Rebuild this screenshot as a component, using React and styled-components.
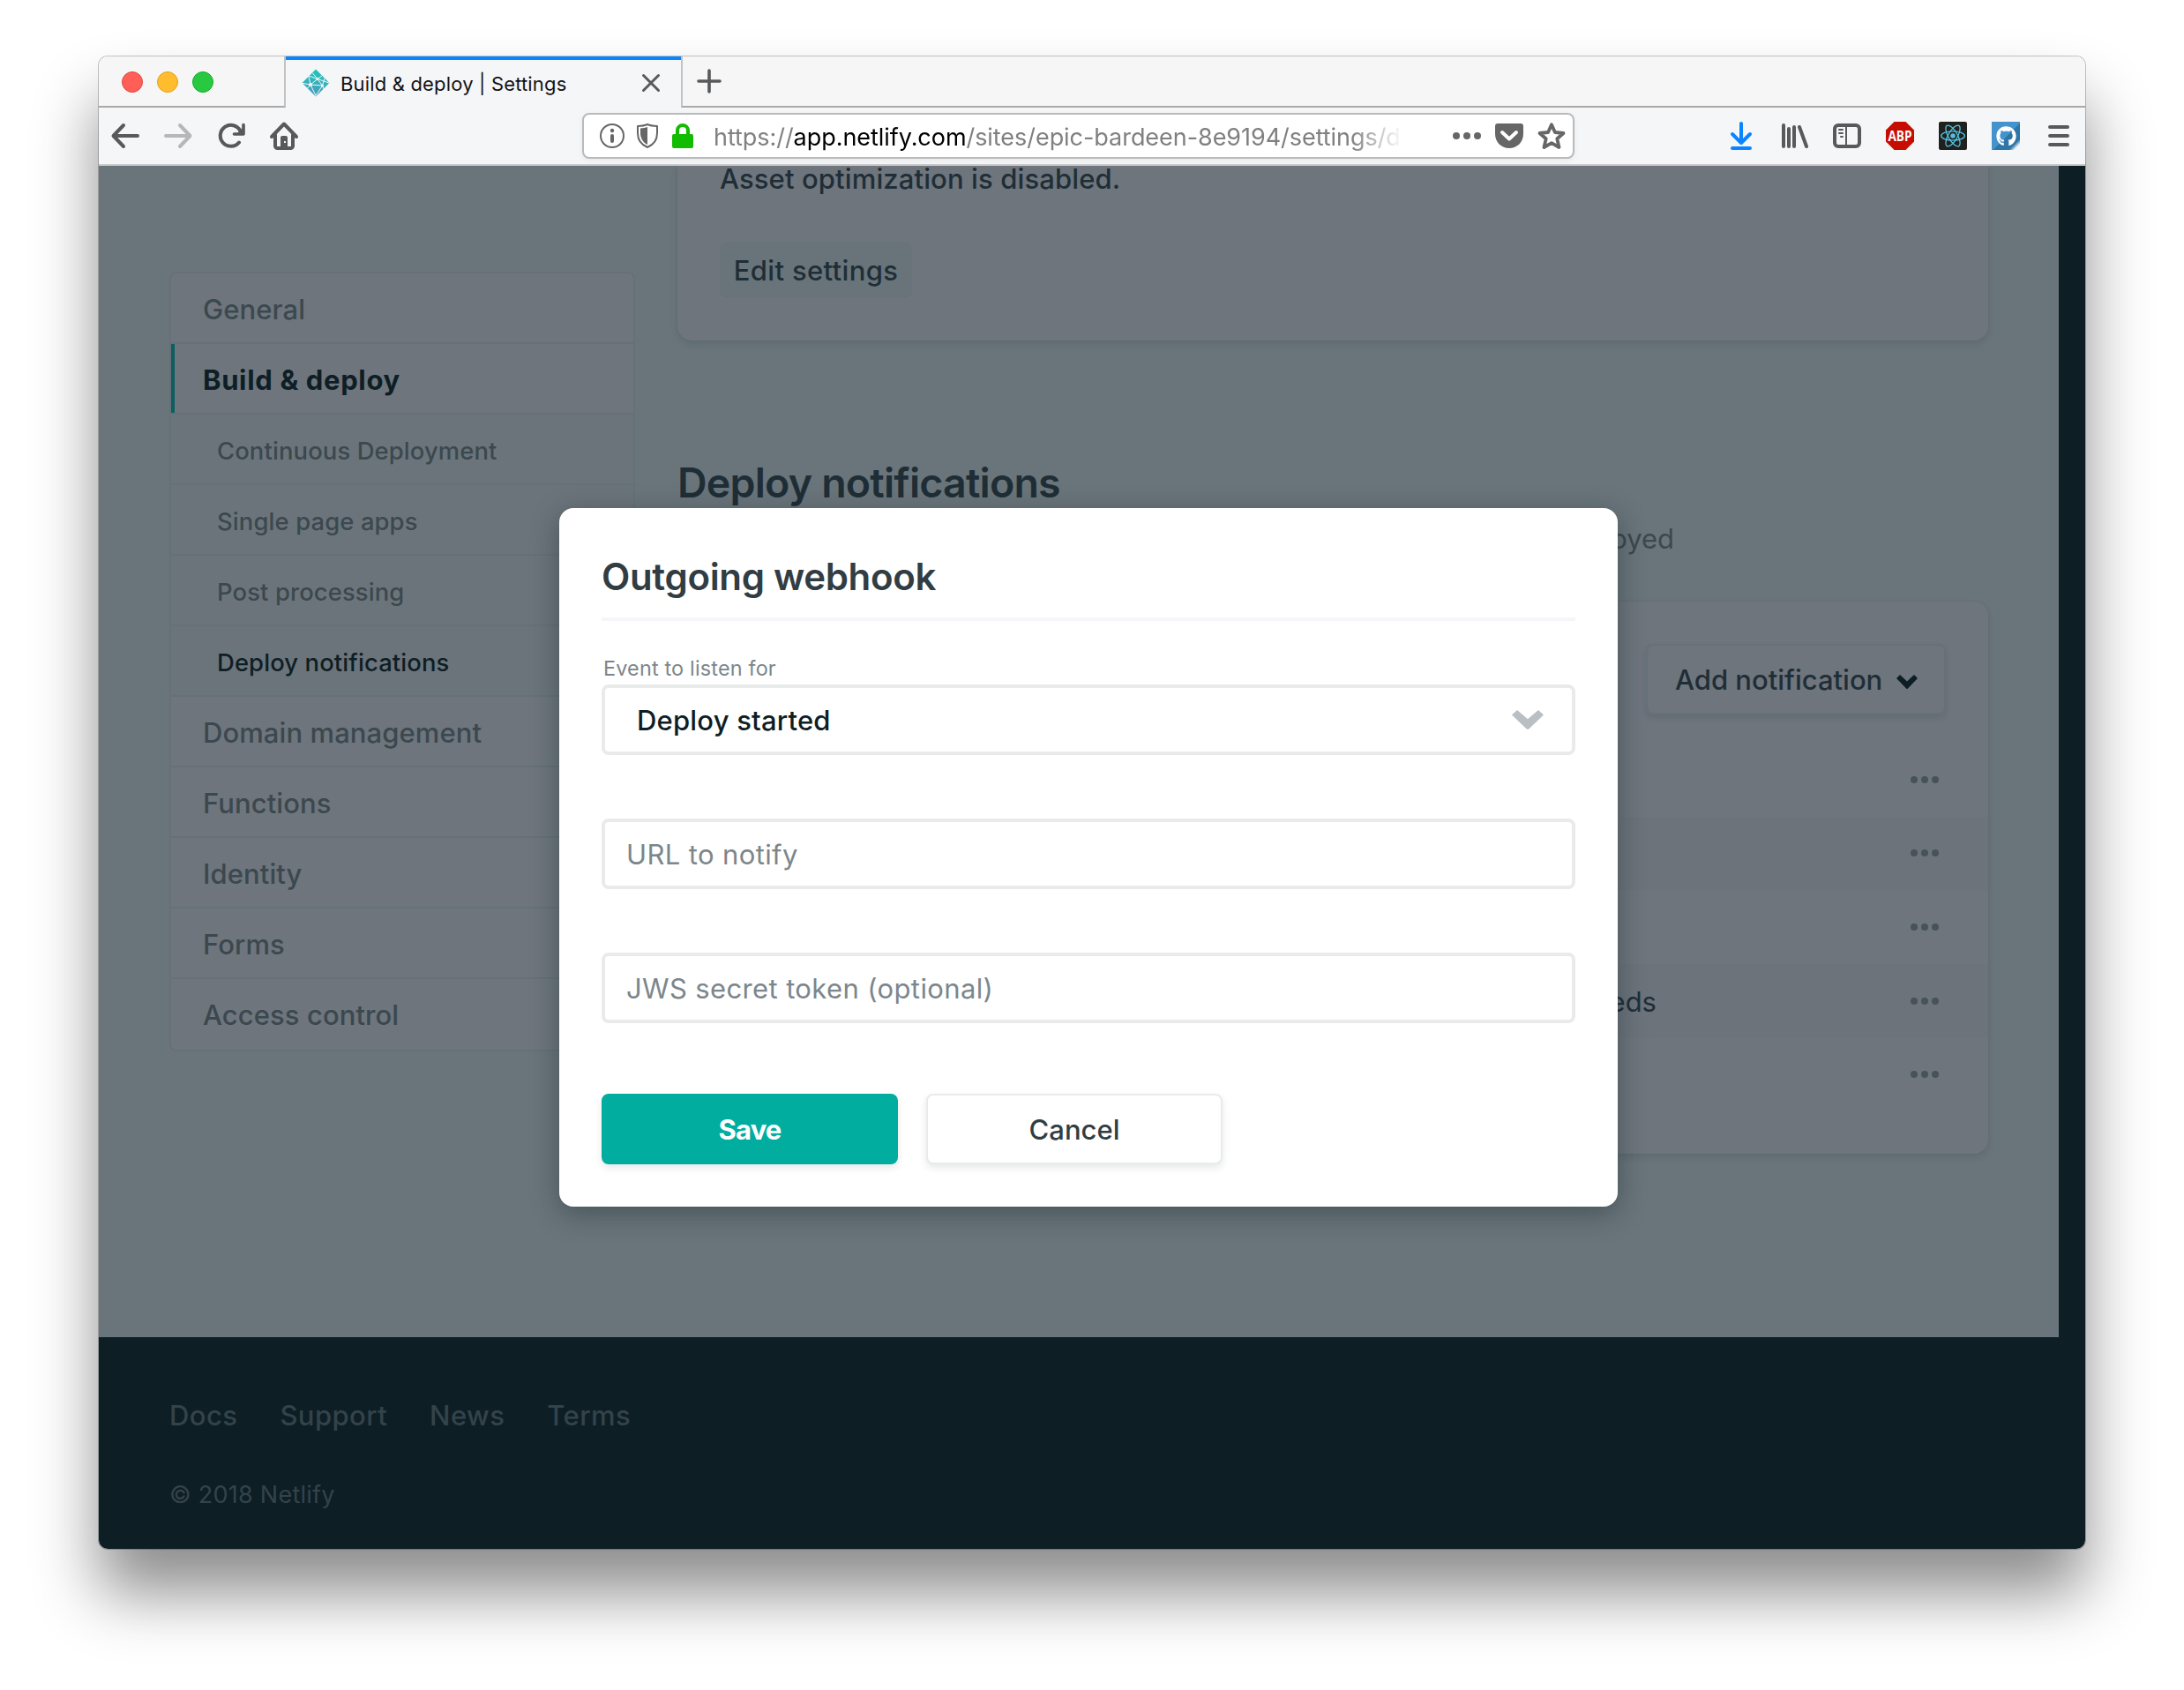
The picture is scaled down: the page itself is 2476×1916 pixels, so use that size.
import React from 'react';
import styled, { createGlobalStyle, css } from 'styled-components';
import { FaGithub } from 'react-icons/fa';

const GlobalStyle = createGlobalStyle`
  *, *::before, *::after { box-sizing: border-box; }
  body {
    margin: 0;
    background: #fff;
    font-family: Inter, 'Liberation Sans', sans-serif;
    font-size: 31px;
    font-weight: 500;
    color: #1f2e36;
  }
  button, input { font: inherit; letter-spacing: inherit; margin: 0; }
`;

const Desktop = styled.main`
  width: 2476px;
  height: 1916px;
  padding: 64px 112px 160px;
  overflow: hidden;
`;

const Window = styled.div`
  height: 1692px;
  border-radius: 10px;
  box-shadow: 0 0 0 1px rgba(0, 0, 0, 0.22), 0 50px 72px rgba(0, 0, 0, 0.45);
`;

const WindowClip = styled.div`
  height: 100%;
  display: flex;
  flex-direction: column;
  border-radius: 10px;
  overflow: hidden;
`;

const TabStrip = styled.div`
  display: flex;
  height: 58px;
  flex: none;
  background: #f6f6f6;
`;

const TrafficLights = styled.div`
  display: flex;
  gap: 16px;
  width: 212px;
  padding: 17px 0 0 26px;
  border-right: 2px solid #c2c3c4;
  border-bottom: 2px solid #a9a9a9;
`;

const Light = styled.span`
  width: 24px;
  height: 24px;
  border-radius: 50%;
  background: ${(p) => p.$fill};
  border: 1px solid ${(p) => p.$edge};
`;

const Tab = styled.div`
  display: flex;
  align-items: center;
  width: 448px;
  padding: 0 24px 2px 18px;
  background: #f5f6f8;
  border-top: 4px solid #0a84ff;
`;

const TabTitle = styled.span`
  flex: 1;
  margin-left: 12px;
  padding-top: 1px;
  font-size: 22px;
  font-weight: 400;
  letter-spacing: 0.17px;
  color: #141416;
  white-space: nowrap;
`;

const TabRest = styled.div`
  flex: 1;
  padding: 14px 0 0 16px;
  border-left: 2px solid #c2c3c4;
  border-bottom: 2px solid #a9a9a9;
`;

const Toolbar = styled.div`
  display: flex;
  align-items: center;
  justify-content: space-between;
  height: 66px;
  flex: none;
  padding: 0 18px 0 14px;
  background: #f5f6f8;
  border-bottom: 2px solid #cbcbcb;
`;

const NavButtons = styled.div`
  display: flex;
  align-items: center;
  gap: 28px;
  width: 534px;
`;

const UrlBar = styled.div`
  display: flex;
  align-items: center;
  width: 1125px;
  height: 52px;
  padding: 0 8px 0 18px;
  gap: 14px;
  background: #fff;
  border: 2px solid #b9babc;
  border-radius: 8px;
  box-shadow: 0 2px 6px rgba(0, 0, 0, 0.06);
`;

const UrlText = styled.div`
  flex: 1;
  min-width: 0;
  margin-left: 9px;
  margin-right: 42px;
  padding-top: 3px;
  overflow: hidden;
  white-space: nowrap;
  font-size: 27px;
  font-weight: 400;
  line-height: 40px;
  letter-spacing: -0.05px;
  color: #808080;
  mask-image: linear-gradient(to right, #000 calc(100% - 60px), transparent);
  b { font-weight: 400; color: #000; }
`;

const UrlActions = styled.div`
  display: flex;
  align-items: center;
  gap: 16px;
`;

const Extensions = styled.div`
  display: flex;
  align-items: center;
  gap: 28px;
  margin-left: auto;
`;

const Icon = styled.svg`
  display: block;
  flex: none;
  width: ${(p) => p.$w || 32}px;
  height: ${(p) => p.$h || p.$w || 32}px;
  margin-left: ${(p) => p.$ml || 0}px;
  margin-top: ${(p) => p.$mt || 0}px;
  overflow: visible;
`;

const OctoTile = styled.span`
  display: grid;
  place-items: center;
  width: 32px;
  height: 32px;
  color: #fff;
  font-size: 23px;
  background: linear-gradient(135deg, #4493cc 0 52%, #2e76a8 52% 80%, #f5f6f8 90%);
`;

const Viewport = styled.div`
  position: relative;
  flex: 1;
  min-height: 0;
  background: #0e1e25;
`;

const Page = styled.div`
  width: 2222px;
  height: 1328px;
  padding: 0 80px;
  display: grid;
  grid-template-columns: 528px 1486px;
  column-gap: 48px;
  align-items: start;
  background: #69757a;
  overflow: hidden;
`;

const SideMenu = styled.nav`
  margin-top: 120px;
  border: 2px solid #657177;
  border-radius: 8px;
  overflow: hidden;
  background: #6e757d;
`;

const MenuItem = styled.a`
  display: block;
  height: 80px;
  line-height: 80px;
  padding: 1px 0 0 36px;
  border-bottom: 2px solid #657177;
  font-weight: 500;
  letter-spacing: 0.08px;
  color: #3b484e;
  white-space: nowrap;
  &:last-child { border-bottom: 0; }

  ${(p) => p.$sub && css`
    padding-left: 52px;
    font-size: 27.4px;
    letter-spacing: 0.12px;
    background: #6c747b;
  `}
  ${(p) => p.$active && css`
    color: #0e1e25;
  `}
  ${(p) => p.$active && !p.$sub && css`
    box-shadow: inset 4px 0 0 #0b5f60;
    font-weight: 700;
    letter-spacing: 0.65px;
  `}
`;

const Column = styled.div`
  display: flex;
  flex-direction: column;
  width: 1486px;
`;

const Card = styled.section`
  background: #6e757d;
  box-shadow: 0 4px 8px rgba(14, 30, 37, 0.1), 0 0 3px rgba(14, 30, 37, 0.06);
  border-radius: 16px;
`;

const AssetCard = styled(Card)`
  height: 198px;
  padding: 0 48px;
  border-radius: 0 0 16px 16px;
`;

const AssetText = styled.p`
  margin: 0;
  height: 86px;
  line-height: 30px;
  letter-spacing: 0.12px;
`;

const EditButton = styled.button`
  display: block;
  width: 218px;
  height: 64px;
  padding: 0;
  border: 0;
  border-radius: 8px;
  background: #68747a;
  color: inherit;
  letter-spacing: 0.35px;
`;

const SectionTitle = styled.h2`
  margin: 131px 0 6px;
  height: 60px;
  line-height: 60px;
  font-size: 46.5px;
  font-weight: 600;
  letter-spacing: -0.8px;
`;

const SectionLead = styled.p`
  display: flex;
  justify-content: flex-end;
  width: 1130px;
  height: 99px;
  margin: 0;
  padding-top: 8px;
  line-height: 40px;
  font-weight: 400;
  color: #3b484e;
  white-space: nowrap;
`;

const NotifyCard = styled(Card)`
  height: 626px;
  padding: 48px 0 0;
`;

const AddButton = styled.button`
  display: flex;
  align-items: center;
  justify-content: space-between;
  width: 340px;
  height: 80px;
  margin: 0 48px 32px auto;
  padding: 0 30px 0 31px;
  background: #6e757d;
  border: 2px solid #667278;
  border-radius: 8px;
  box-shadow: 0 4px 6px rgba(14, 30, 37, 0.1);
  color: inherit;
`;

const NotifyRow = styled.div`
  display: flex;
  align-items: center;
  justify-content: space-between;
  height: 83.6px;
  padding: 0 56px 0 48px;
  font-weight: 400;
  background: ${(p) => (p.$alt ? '#6c737b' : 'transparent')};
`;

const RowText = styled.span`
  width: 1062px;
  padding-top: 2px;
  text-align: right;
  white-space: nowrap;
`;

const Dots = styled.span`
  display: flex;
  gap: 4px;
  &::before, &::after, i {
    content: '';
    width: 8px;
    height: 8px;
    border-radius: 50%;
    background: ${(p) => p.$color || '#46535a'};
  }
`;

const Footer = styled.footer`
  padding: 64px 80px 0;
  color: #34434a;
`;

const FooterLinks = styled.div`
  display: flex;
  gap: 48px;
  line-height: 50px;
  letter-spacing: 0.42px;
`;

const Copyright = styled.div`
  margin-top: 41px;
  line-height: 48px;
  font-size: 27px;
  font-weight: 400;
  letter-spacing: 0.25px;
`;

const Overlay = styled.div`
  position: absolute;
  inset: 0;
  padding-right: 8px;
  display: grid;
  place-items: center;
`;

const Dialog = styled.form`
  width: 1200px;
  height: 792px;
  padding: 48px;
  background: #fff;
  border-radius: 16px;
  box-shadow: 0 8px 32px rgba(14, 30, 37, 0.38);
`;

const DialogTitle = styled.h1`
  margin: 0 0 36px;
  height: 80px;
  line-height: 59px;
  font-size: 42px;
  font-weight: 600;
  letter-spacing: -0.32px;
  color: #313d43;
  border-bottom: 4px solid #f5f6f9;
`;

const FieldLabel = styled.label`
  display: block;
  height: 36px;
  padding-left: 2px;
  line-height: 35px;
  font-size: 23.4px;
  font-weight: 400;
  letter-spacing: 0.18px;
  color: #7c868b;
`;

const SelectBox = styled.div`
  display: flex;
  align-items: center;
  justify-content: space-between;
  height: 80px;
  padding: 0 32px 0 36px;
  border: 4px solid #e9ebeb;
  border-radius: 8px;
  color: #0e1e25;
  letter-spacing: 0.2px;
`;

const TextInput = styled.input`
  display: block;
  width: 100%;
  height: 80px;
  margin-top: 72px;
  padding: 0 24px;
  border: 4px solid #e9ebeb;
  border-radius: 8px;
  background: #fff;
  font-weight: 400;
  letter-spacing: 0.37px;
  &::placeholder { color: #7c868b; opacity: 1; }
`;

const Actions = styled.div`
  display: flex;
  gap: 32px;
  margin-top: 80px;
`;

const ActionButton = styled.button`
  width: 336px;
  height: 80px;
  padding: 0;
  border-radius: 8px;
  border: 2px solid ${(p) => (p.$primary ? '#00ad9f' : '#e9ebeb')};
  background: ${(p) => (p.$primary ? '#00ad9f' : '#fff')};
  color: ${(p) => (p.$primary ? '#fff' : '#313d43')};
  font-weight: ${(p) => (p.$primary ? 700 : 500)};
  letter-spacing: ${(p) => (p.$primary ? -0.8 : 0)}px;
  box-shadow: 0 4px 8px rgba(14, 30, 37, 0.1);
`;

const stroke = { fill: 'none', stroke: '#58595b', strokeWidth: 4, strokeLinecap: 'round', strokeLinejoin: 'round' };

const NetlifyMark = () => (
  <Icon viewBox="0 0 32 32">
    <defs>
      <linearGradient id="nf" x1="0" y1="0" x2="0" y2="1">
        <stop offset="0" stopColor="#20c6b7" />
        <stop offset="1" stopColor="#4d9abf" />
      </linearGradient>
    </defs>
    <path d="M16 0.6 31.4 16 16 31.4 0.6 16Z" fill="url(#nf)" />
    <path
      d="M8 8l10 3.500L23 8M12 4.500l6 7M18 11.500l-8 6.500L1 16.400M10 18l-2-9M10 18l13.500 1L18 11.500M23.500 19 26 10.500M10 18l6 12.500L23.500 19M10 18l-3.500 4M23.500 19l1.500 4M18 11.500 31 16"
      fill="none" stroke="#f5f6f8" strokeWidth="1"
    />
    <circle cx="18" cy="11.500" r="1.500" fill="#f5f6f8" />
    <circle cx="10" cy="18" r="2" fill="#f5f6f8" />
    <circle cx="23.500" cy="19" r="1.500" fill="#f5f6f8" />
  </Icon>
);

const BackIcon = ({ flip }) => (
  <Icon viewBox="0 0 32 32">
    <g transform={flip ? 'translate(32 0) scale(-1 1)' : undefined} opacity={flip ? 0.4 : 1}>
      <path d="M14 4 2.500 16 14 28M3 16H30" {...stroke} />
    </g>
  </Icon>
);

const ReloadIcon = () => (
  <Icon viewBox="0 0 32 32">
    <path d="M25 23.500A12 12 0 1 1 26.500 10.500" {...stroke} />
    <path d="M30 3.500V14H19.500" {...stroke} strokeWidth="3.600" />
    <path d="M30 6v8h-8z" fill="#58595b" />
  </Icon>
);

const HomeIcon = () => (
  <Icon viewBox="0 0 32 32">
    <path d="M2 17 16 2.500 30 17" {...stroke} />
    <path d="M6 15V27.500a2.500 2.500 0 0 0 2.500 2.500h15a2.500 2.500 0 0 0 2.500-2.500V15" {...stroke} />
    <path d="M12 29V18a2 2 0 0 1 2-2h4a2 2 0 0 1 2 2v11z" fill="#58595b" />
    <rect x="16" y="22" width="2" height="2" fill="#f5f6f8" />
  </Icon>
);

const InfoIcon = () => (
  <Icon $w={28} viewBox="0 0 28 28">
    <circle cx="14" cy="14" r="13" fill="none" stroke="#666" strokeWidth="2" />
    <circle cx="14" cy="8" r="2.200" fill="#666" />
    <rect x="12" y="12" width="4" height="10" rx="2" fill="#666" />
  </Icon>
);

const ShieldIcon = () => (
  <Icon $w={24} $h={28} viewBox="0 0 24 28">
    <path d="M12 1c3 1.300 7 1.800 11 2v8c0 7-4 13-11 16C5 24 1 18 1 11V3c4-.2 8-.7 11-2Z" fill="none" stroke="#666" strokeWidth="2" strokeLinejoin="round" />
    <path d="M12 4v20C7 21.500 4 16.500 4 11V5.500C7 5.300 10 4.800 12 4Z" fill="#666" />
  </Icon>
);

const LockIcon = () => (
  <Icon $w={24} $h={28} $ml={2} viewBox="0 0 24 28">
    <path d="M6 13V8a6 6 0 0 1 12 0v5" fill="none" stroke="#12bc00" strokeWidth="4" />
    <rect x="0" y="12" width="24" height="16" rx="2" fill="#12bc00" />
  </Icon>
);

const PocketIcon = () => (
  <Icon $w={32} $h={28} viewBox="0 0 32 28">
    <path d="M3 0h26a3 3 0 0 1 3 3v9c0 9-7 16-16 16S0 21 0 12V3a3 3 0 0 1 3-3Z" fill="#666" />
    <path d="M8 10l8 7.500L24 10" fill="none" stroke="#fff" strokeWidth="4" strokeLinecap="round" strokeLinejoin="round" />
  </Icon>
);

const StarIcon = () => (
  <Icon viewBox="0 0 32 32">
    <path d="M16 3.200 19.900 12 29.500 13 22.300 19.300 24.500 29 16 24.200 7.500 29 9.700 19.300 2.500 13 12.100 12Z" fill="none" stroke="#666" strokeWidth="3.800" strokeLinejoin="round" />
  </Icon>
);

const DownloadIcon = () => (
  <Icon $w={24} $h={32} viewBox="0 0 24 32">
    <path d="M12 2V24M2 14l10 10 10-10M2 30H22" {...stroke} stroke="#0a84ff" />
  </Icon>
);

const LibraryIcon = () => (
  <Icon $w={30} $h={28} $ml={6} viewBox="0 0 30 28">
    <path d="M2 2V26M8 6V26M14 4V26M20 4l8 22" {...stroke} />
  </Icon>
);

const SidebarIcon = () => (
  <Icon $w={32} $h={28} viewBox="0 0 32 28">
    <rect x="2" y="2" width="28" height="24" rx="4" {...stroke} />
    <path d="M15 3V25" stroke="#58595b" strokeWidth="2" />
    <path d="M7 7h4M7 11h4M9 15h2" {...stroke} strokeWidth="2" />
  </Icon>
);

const AbpIcon = () => (
  <Icon viewBox="0 0 32 32">
    <path d="M9.500 0h13L32 9.500v13L22.500 32h-13L0 22.500v-13Z" fill="#c70d00" />
    <text x="16" y="22" textAnchor="middle" textLength="27" lengthAdjust="spacingAndGlyphs" fontFamily="Open Sans, sans-serif" fontWeight="700" fontSize="16.500" fill="#fff">ABP</text>
  </Icon>
);

const ReactIcon = () => (
  <Icon viewBox="0 0 32 32">
    <rect width="32" height="32" rx="2" fill="#20201f" />
    <g fill="none" stroke="#53c1de" strokeWidth="1.300">
      {[0, 60, 120].map((a) => (
        <ellipse key={a} cx="16" cy="16" rx="13.400" ry="5.200" transform={`rotate(${a} 16 16)`} />
      ))}
    </g>
    <circle cx="16" cy="16" r="2.800" fill="#53c1de" />
  </Icon>
);

const MenuIcon = () => (
  <Icon $w={24} $h={24} $ml={4} viewBox="0 0 24 24">
    <path d="M2 2H22M2 12H22M2 22H22" {...stroke} />
  </Icon>
);

const Chevron = ({ w, h, mt, color }) => (
  <Icon $w={w} $h={h} $mt={mt} viewBox="0 0 36 26" preserveAspectRatio="none">
    <path d="M6 0 18 12 30 0 36 6.500 19.500 25a2 2 0 0 1-3 0L0 6.500Z" fill={color} />
  </Icon>
);

const menu = [
  { label: 'General' },
  { label: 'Build & deploy', active: true },
  { label: 'Continuous Deployment', sub: true },
  { label: 'Single page apps', sub: true },
  { label: 'Post processing', sub: true },
  { label: 'Deploy notifications', sub: true, active: true },
  { label: 'Domain management' },
  { label: 'Functions' },
  { label: 'Identity' },
  { label: 'Forms' },
  { label: 'Access control' },
];

const notifications = ['', '', '', 'when deploy succeeds', ''];

export default function App() {
  return (
    <Desktop>
      <GlobalStyle />
      <Window>
        <WindowClip>
          <TabStrip>
            <TrafficLights>
              <Light $fill="#ff5f57" $edge="#e2463f" />
              <Light $fill="#ffbd2e" $edge="#e1a116" />
              <Light $fill="#28c940" $edge="#12ac28" />
            </TrafficLights>
            <Tab>
              <NetlifyMark />
              <TabTitle>Build &amp; deploy | Settings</TabTitle>
              <Icon $w={20} viewBox="0 0 20 20">
                <path d="M1.500 1.500l17 17M18.500 1.500l-17 17" {...stroke} strokeWidth="3" />
              </Icon>
            </Tab>
            <TabRest>
              <Icon $w={28} viewBox="0 0 28 28">
                <path d="M14 2V26M2 14H26" {...stroke} strokeWidth="3.600" />
              </Icon>
            </TabRest>
          </TabStrip>

          <Toolbar>
            <NavButtons>
              <BackIcon />
              <BackIcon flip />
              <ReloadIcon />
              <HomeIcon />
            </NavButtons>
            <UrlBar>
              <InfoIcon />
              <ShieldIcon />
              <LockIcon />
              <UrlText>
                https://<b>app.netlify.com</b>/sites/epic-bardeen-8e9194/settings/d
              </UrlText>
              <UrlActions>
                <Dots $color="#666"><i /></Dots>
                <PocketIcon />
                <StarIcon />
              </UrlActions>
            </UrlBar>
            <Extensions>
              <DownloadIcon />
              <LibraryIcon />
              <SidebarIcon />
              <AbpIcon />
              <ReactIcon />
              <OctoTile><FaGithub /></OctoTile>
              <MenuIcon />
            </Extensions>
          </Toolbar>

          <Viewport>
            <Page>
              <SideMenu>
                {menu.map((m) => (
                  <MenuItem key={m.label} $sub={m.sub} $active={m.active}>{m.label}</MenuItem>
                ))}
              </SideMenu>
              <Column>
                <AssetCard>
                  <AssetText>Asset optimization is disabled.</AssetText>
                  <EditButton>Edit settings</EditButton>
                </AssetCard>
                <SectionTitle>Deploy notifications</SectionTitle>
                <SectionLead>when your site is deployed</SectionLead>
                <NotifyCard>
                  <AddButton>
                    Add notification
                    <Chevron w={24} h={16} mt={5} color="#0e1e25" />
                  </AddButton>
                  {notifications.map((text, i) => (
                    <NotifyRow key={i} $alt={i % 2 === 1}>
                      <RowText>{text}</RowText>
                      <Dots><i /></Dots>
                    </NotifyRow>
                  ))}
                </NotifyCard>
              </Column>
            </Page>
            <Footer>
              <FooterLinks>
                <a>Docs</a>
                <a>Support</a>
                <a>News</a>
                <a>Terms</a>
              </FooterLinks>
              <Copyright>© 2018 Netlify</Copyright>
            </Footer>

            <Overlay>
              <Dialog>
                <DialogTitle>Outgoing webhook</DialogTitle>
                <FieldLabel>Event to listen for</FieldLabel>
                <SelectBox>
                  Deploy started
                  <Chevron w={36} h={22} color="#b9bfc3" />
                </SelectBox>
                <TextInput placeholder="URL to notify" />
                <TextInput placeholder="JWS secret token (optional)" />
                <Actions>
                  <ActionButton type="button" $primary>Save</ActionButton>
                  <ActionButton type="button">Cancel</ActionButton>
                </Actions>
              </Dialog>
            </Overlay>
          </Viewport>
        </WindowClip>
      </Window>
    </Desktop>
  );
}
